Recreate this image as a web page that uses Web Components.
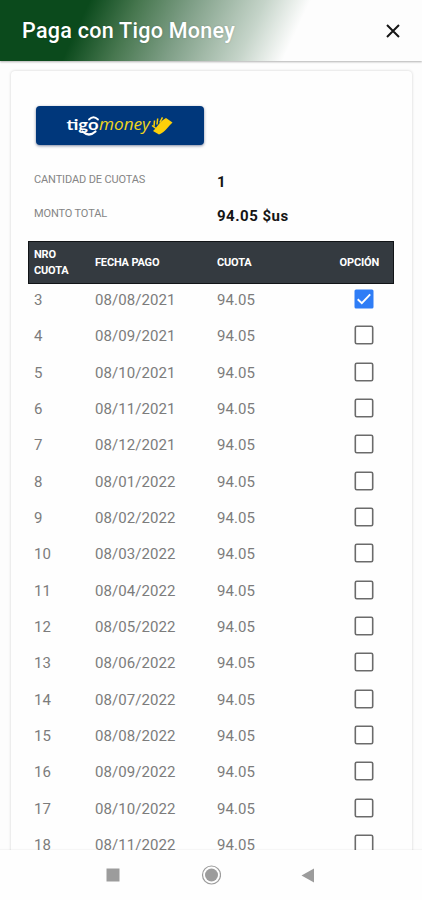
<!DOCTYPE html>
<html lang="es">
<head>
<meta charset="utf-8">
<meta name="viewport" content="width=device-width, initial-scale=1">
<title>Paga con Tigo Money</title>
<style>
    body{
        margin: 0;
        height: 900px;
        overflow: hidden;
        background-color: #fdfdfd;
        font-family: Roboto, sans-serif;
    }
</style>
</head>
<body>
<payment-page>
    <page-header slot="header">Paga con Tigo Money</page-header>
    <tigo-button></tigo-button>
    <summary-line label="Cantidad de cuotas">1</summary-line>
    <summary-line label="Monto total">94.05 $us</summary-line>
    <fee-table></fee-table>
    <nav-bar slot="footer"></nav-bar>
</payment-page>

<script>
const pageTemplate = document.createElement('template');
pageTemplate.innerHTML = /*html*/`
    <style>
        :host{
            display: flex;
            flex-direction: column;
            height: 900px;
        }
        main{
            flex: 1;
            min-height: 0;
            overflow: hidden;
            padding: 10px 10px 0 11px;
        }
        .card{
            box-sizing: border-box;
            height: 860px;
            padding: 35px 18px 0 17px;
            background-color: #fefefe;
            border-radius: 4px;
            box-shadow: 0 0 3px rgba(0, 0, 0, 0.18);
        }
    </style>
    <slot name="header"></slot>
    <main><div class="card"><slot></slot></div></main>
    <slot name="footer"></slot>
`;

class PaymentPage extends HTMLElement {
    constructor() {
        super();
        this.attachShadow({ mode: 'open' });
        this.shadowRoot.appendChild(pageTemplate.content.cloneNode(true));
    }
}

const headerTemplate = document.createElement('template');
headerTemplate.innerHTML = /*html*/`
    <style>
        :host{
            display: flex;
            flex: none;
            align-items: center;
            justify-content: space-between;
            box-sizing: border-box;
            height: 61px;
            padding: 0 21px 0 22px;
            background: linear-gradient(115deg, #0b4a1c 20%, #47774f 31%, #7f9f87 43%, #c5d4c9 59%, #fdfdfd 69%);
            box-shadow: 0 1px 2px rgba(0, 0, 0, 0.3);
            position: relative;
        }
        h1{
            margin: 0;
            color: white;
            font-size: 21.5px;
            font-weight: 500;
            line-height: 60px;
            letter-spacing: 0.28px;
            text-shadow: 0 0 2px rgba(0, 0, 0, 0.2);
        }
        svg{
            display: block;
        }
    </style>
    <h1><slot></slot></h1>
    <svg width="16" height="16" viewBox="0 0 16 16">
        <path d="M2 2L14 14M14 2L2 14" fill="none" stroke="#161616" stroke-width="2"/>
    </svg>
`;

class PageHeader extends HTMLElement {
    constructor() {
        super();
        this.attachShadow({ mode: 'open' });
        this.shadowRoot.appendChild(headerTemplate.content.cloneNode(true));
    }
}

const tigoTemplate = document.createElement('template');
tigoTemplate.innerHTML = /*html*/`
    <style>
        :host{
            display: block;
            width: 168px;
            height: 39px;
            margin-left: 8px;
            margin-bottom: 23px;
            border-radius: 4px;
            background-color: #00377b;
            box-shadow: 0 1px 3px rgba(0, 20, 70, 0.5);
        }
        svg{
            display: block;
        }
        text{
            font-family: "Open Sans", sans-serif;
        }
        .tigo{
            font-family: Lato, sans-serif;
        }
    </style>
    <svg width="168" height="39" viewBox="0 0 168 39">
        <text class="tigo" x="30.5" y="23.5" font-size="16" font-weight="700" fill="#fff" textLength="32" lengthAdjust="spacingAndGlyphs">tigo</text>
        <path d="M53 13.5Q57.5 9 62 13.5" fill="none" stroke="#fff" stroke-width="1.8" stroke-linecap="round"/>
        <path d="M46.5 25.5Q53 31.5 59.500 25.500" fill="none" stroke="#fff" stroke-width="2.2" stroke-linecap="round"/>
        <text x="63" y="23.5" font-size="16" font-weight="500" font-style="italic" fill="#f0d51c" textLength="51" lengthAdjust="spacingAndGlyphs">money</text>
        <path d="M117 25C120.500 22 123.500 15.500 130 12L136.500 16.500C132.500 20 129 26.500 123 28.500Z" fill="#fccf09"/>
        <path d="M118 20.500L118.500 14.500M121 18.500L121.700 12.500M123.800 16.500L126.500 11.300" stroke="#fccf09" stroke-width="1.500"/>
        <path d="M116 19.500L120 22.500" stroke="#fccf09" stroke-width="1.500"/>
    </svg>
`;

class TigoButton extends HTMLElement {
    constructor() {
        super();
        this.attachShadow({ mode: 'open' });
        this.shadowRoot.appendChild(tigoTemplate.content.cloneNode(true));
    }
}

const summaryTemplate = document.createElement('template');
summaryTemplate.innerHTML = /*html*/`
    <style>
        :host{
            display: grid;
            grid-template-columns: 183px 1fr;
            height: 34px;
            padding-left: 6px;
        }
        .label{
            padding-top: 4px;
            color: #858585;
            font-size: 11px;
            line-height: 15px;
            letter-spacing: -0.13px;
            text-transform: uppercase;
        }
        .value{
            padding-top: 4px;
            color: #151515;
            font-size: 15px;
            font-weight: 700;
            line-height: 20px;
            letter-spacing: 0.5px;
        }
    </style>
    <span class="label"></span>
    <span class="value"><slot></slot></span>
`;

class SummaryLine extends HTMLElement {
    constructor() {
        super();
        this.attachShadow({ mode: 'open' });
        this.shadowRoot.appendChild(summaryTemplate.content.cloneNode(true));
    }

    connectedCallback() {
        this.shadowRoot.querySelector('.label').textContent = this.getAttribute('label');
    }
}

const rowTemplate = document.createElement('template');
rowTemplate.innerHTML = /*html*/`
    <style>
        :host{
            display: grid;
            grid-template-columns: 61px 122px 1fr 20px;
            align-items: center;
            box-sizing: border-box;
            height: 36.33px;
            padding: 0 20px 0 6px;
            color: #7c7c7c;
            font-size: 15px;
            letter-spacing: 0.08px;
        }
        .box{
            display: block;
            justify-self: end;
            margin-top: -2px;
        }
        .on, :host([checked]) .off{
            display: none;
        }
        :host([checked]) .on{
            display: block;
        }
    </style>
    <span class="number"></span>
    <span class="date"></span>
    <span class="amount"></span>
    <svg class="box" width="20" height="20" viewBox="0 0 20 20">
        <rect class="off" x="1.3" y="1.3" width="17.4" height="17.4" rx="1.5" fill="#fff" stroke="#6b6b6b" stroke-width="1.6"/>
        <g class="on">
            <rect x="0.5" y="0.5" width="19" height="19" rx="1.5" fill="#2f7df6"/>
            <path d="M3.7 10.3L7.8 14.2L16.2 5.3" fill="none" stroke="#fff" stroke-width="1.9"/>
        </g>
    </svg>
`;

class FeeRow extends HTMLElement {
    constructor() {
        super();
        this.attachShadow({ mode: 'open' });
        this.shadowRoot.appendChild(rowTemplate.content.cloneNode(true));
    }

    connectedCallback() {
        this.shadowRoot.querySelector('.number').textContent = this.getAttribute('number');
        this.shadowRoot.querySelector('.date').textContent = this.getAttribute('date');
        this.shadowRoot.querySelector('.amount').textContent = this.getAttribute('amount');
    }
}

const tableTemplate = document.createElement('template');
tableTemplate.innerHTML = /*html*/`
    <style>
        :host{
            display: block;
            margin-top: 5px;
        }
        .head{
            display: grid;
            grid-template-columns: 61px 122px 1fr auto;
            align-items: center;
            box-sizing: border-box;
            height: 43px;
            margin-bottom: -2px;
            padding: 0 14px 0 5px;
            border: 1px solid #111417;
            background-color: #343a40;
            color: white;
            font-size: 11px;
            font-weight: 700;
            line-height: 16px;
            letter-spacing: -0.17px;
        }
    </style>
    <div class="head">
        <span>NRO<br>CUOTA</span>
        <span>FECHA PAGO</span>
        <span>CUOTA</span>
        <span>OPCIÓN</span>
    </div>
    <div class="rows"></div>
`;

const dates = [
    '08/08/2021', '08/09/2021', '08/10/2021', '08/11/2021',
    '08/12/2021', '08/01/2022', '08/02/2022', '08/03/2022',
    '08/04/2022', '08/05/2022', '08/06/2022', '08/07/2022',
    '08/08/2022', '08/09/2022', '08/10/2022', '08/11/2022'
];

class FeeTable extends HTMLElement {
    constructor() {
        super();
        this.attachShadow({ mode: 'open' });
        this.shadowRoot.appendChild(tableTemplate.content.cloneNode(true));
    }

    connectedCallback() {
        const rows = this.shadowRoot.querySelector('.rows');
        rows.innerHTML = '';
        dates.forEach((date, index) => {
            const row = document.createElement('fee-row');
            row.setAttribute('number', index + 3);
            row.setAttribute('date', date);
            row.setAttribute('amount', '94.05');
            // only the first pending fee is selected
            if (index === 0){
                row.setAttribute('checked', '');
            }
            rows.appendChild(row);
        });
    }
}

const navTemplate = document.createElement('template');
navTemplate.innerHTML = /*html*/`
    <style>
        :host{
            display: grid;
            flex: none;
            grid-template-columns: 20px 20px 20px;
            justify-content: center;
            align-items: center;
            gap: 78px;
            box-sizing: border-box;
            height: 50px;
            background-color: #fefefe;
            box-shadow: 0 -1px 1px rgba(0, 0, 0, 0.03);
        }
        svg{
            display: block;
            fill: #9c9c9c;
        }
    </style>
    <svg width="20" height="20" viewBox="0 0 20 20"><path d="M3.500 3.500H16.500V16.500H3.500Z"/></svg>
    <svg width="20" height="20" viewBox="0 0 20 20">
        <circle cx="10.5" cy="10" r="9" fill="none" stroke="#9c9c9c" stroke-width="1.2"/>
        <circle cx="10.5" cy="10" r="6.5"/>
    </svg>
    <svg width="20" height="20" viewBox="0 0 20 20"><path d="M15 3.5V17.5L2.5 10.5Z"/></svg>
`;

class NavBar extends HTMLElement {
    constructor() {
        super();
        this.attachShadow({ mode: 'open' });
        this.shadowRoot.appendChild(navTemplate.content.cloneNode(true));
    }
}

window.customElements.define('payment-page', PaymentPage);
window.customElements.define('page-header', PageHeader);
window.customElements.define('tigo-button', TigoButton);
window.customElements.define('summary-line', SummaryLine);
window.customElements.define('fee-row', FeeRow);
window.customElements.define('fee-table', FeeTable);
window.customElements.define('nav-bar', NavBar);
</script>
</body>
</html>
